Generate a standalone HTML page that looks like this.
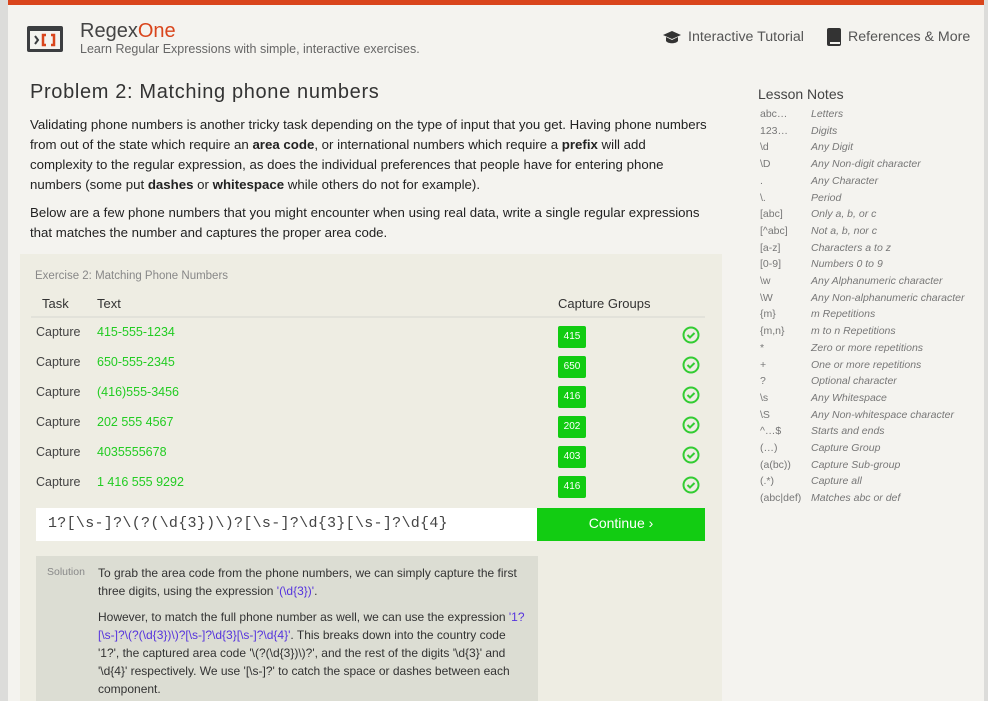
<!DOCTYPE html>
<html style="overflow:hidden"><head><meta charset="utf-8"><style>
*{margin:0;padding:0;box-sizing:border-box}
html,body{width:988px;height:701px;overflow:hidden}
body{background:#dcdcda;font-family:"Liberation Sans",sans-serif;position:relative}
.page{position:absolute;left:8px;top:0;width:976px;height:701px;background:#f4f3ef}
.bar{position:absolute;left:8px;top:0;width:976px;height:5px;background:#d9451c}
.a{position:absolute;white-space:nowrap}
p.t{position:absolute;left:30px;white-space:nowrap;font-size:13.25px;line-height:20px;color:#222}
.ex{position:absolute;left:20px;top:254px;width:702px;height:447px;background:#eeede3}
.row{position:absolute;left:36px;width:670px;height:30px;font-size:12.5px}
.badge{position:absolute;left:522px;top:5px;width:28px;height:22px;background:#11cc11;color:#fff;font-size:10px;text-align:center;line-height:22px;border-radius:2px}
.chk{position:absolute;left:646px;top:5px}
.notes div{position:absolute;font-size:10.5px;color:#777;white-space:nowrap}
.notes i{position:absolute;left:51px}
.sol{position:absolute;left:36px;top:556px;width:502px;height:145px;background:#dcddd3;overflow:hidden}
.sol p{position:absolute;left:62px;width:430px;font-size:12px;line-height:18px;color:#333}
.b{color:#5533dd}
</style></head><body>
<div class="page"></div><div class="bar"></div>
<svg class="a" style="left:26px;top:25px" width="38" height="28" viewBox="0 0 38 28"><rect x="1" y="1" width="36" height="26" rx="2" fill="#3b3d40"/><rect x="4" y="6" width="30" height="18" fill="#f4f3ef"/><path d="M9 11l3 4-3 4" stroke="#3b3d40" stroke-width="2" fill="none"/><path d="M20 10h-3v10h3M25 10h3v10h-3" stroke="#d9451c" stroke-width="2.5" fill="none"/></svg>
<div class="a" style="left:80px;top:20px;font-size:20px;color:#444">Regex<span style="color:#d9451c">One</span></div>
<div class="a" style="left:80px;top:42px;font-size:12.5px;color:#666">Learn Regular Expressions with simple, interactive exercises.</div>
<svg class="a" style="left:662px;top:30px" width="20" height="16" viewBox="0 0 20 16"><path d="M10 1L1 5l9 4 9-4z" fill="#333"/><path d="M4 7v4c2 3 10 3 12 0V7l-6 3z" fill="#333"/></svg>
<div class="a" style="left:688px;top:29px;font-size:14.2px;color:#555">Interactive Tutorial</div>
<svg class="a" style="left:827px;top:28px" width="14" height="18"><rect x="0" y="0" width="14" height="18" rx="2" fill="#333"/><rect x="3" y="14" width="10" height="2" fill="#f4f3ef"/></svg>
<div class="a" style="left:848px;top:29px;font-size:14.2px;color:#555">References &amp; More</div>
<div class="a" style="left:30px;top:81px;font-size:20px;color:#333;letter-spacing:0.65px">Problem 2: Matching phone numbers</div>
<p class="t" style="top:115px">Validating phone numbers is another tricky task depending on the type of input that you get. Having phone numbers<br>from out of the state which require an <b>area code</b>, or international numbers which require a <b>prefix</b> will add<br>complexity to the regular expression, as does the individual preferences that people have for entering phone<br>numbers (some put <b>dashes</b> or <b>whitespace</b> while others do not for example).</p>
<p class="t" style="top:203px">Below are a few phone numbers that you might encounter when using real data, write a single regular expressions<br>that matches the number and captures the proper area code.</p>
<div class="ex"></div>
<div class="a" style="left:35px;top:270px;font-size:11.5px;color:#888">Exercise 2: Matching Phone Numbers</div>
<div class="a" style="left:42px;top:296px;font-size:13px;color:#333">Task</div>
<div class="a" style="left:97px;top:296px;font-size:13px;color:#333">Text</div>
<div class="a" style="left:558px;top:296px;font-size:13px;color:#333">Capture Groups</div>
<div class="a" style="left:31px;top:316px;width:674px;height:2px;background:#e2e2da"></div>
<div class="row" style="top:321px"><span class="a" style="left:0;top:4px;color:#444">Capture</span><span class="a" style="left:61px;top:4px;color:#2c2">415-555-1234</span><span class="badge">415</span><svg class="chk" width="18" height="18"><circle cx="9" cy="9" r="7.5" fill="none" stroke="#3c3" stroke-width="2"/><path d="M5.5 9l2.5 2.5 4.5-4.5" stroke="#3c3" stroke-width="2" fill="none"/></svg></div>
<div class="row" style="top:351px"><span class="a" style="left:0;top:4px;color:#444">Capture</span><span class="a" style="left:61px;top:4px;color:#2c2">650-555-2345</span><span class="badge">650</span><svg class="chk" width="18" height="18"><circle cx="9" cy="9" r="7.5" fill="none" stroke="#3c3" stroke-width="2"/><path d="M5.5 9l2.5 2.5 4.5-4.5" stroke="#3c3" stroke-width="2" fill="none"/></svg></div>
<div class="row" style="top:381px"><span class="a" style="left:0;top:4px;color:#444">Capture</span><span class="a" style="left:61px;top:4px;color:#2c2">(416)555-3456</span><span class="badge">416</span><svg class="chk" width="18" height="18"><circle cx="9" cy="9" r="7.5" fill="none" stroke="#3c3" stroke-width="2"/><path d="M5.5 9l2.5 2.5 4.5-4.5" stroke="#3c3" stroke-width="2" fill="none"/></svg></div>
<div class="row" style="top:411px"><span class="a" style="left:0;top:4px;color:#444">Capture</span><span class="a" style="left:61px;top:4px;color:#2c2">202 555 4567</span><span class="badge">202</span><svg class="chk" width="18" height="18"><circle cx="9" cy="9" r="7.5" fill="none" stroke="#3c3" stroke-width="2"/><path d="M5.5 9l2.5 2.5 4.5-4.5" stroke="#3c3" stroke-width="2" fill="none"/></svg></div>
<div class="row" style="top:441px"><span class="a" style="left:0;top:4px;color:#444">Capture</span><span class="a" style="left:61px;top:4px;color:#2c2">4035555678</span><span class="badge">403</span><svg class="chk" width="18" height="18"><circle cx="9" cy="9" r="7.5" fill="none" stroke="#3c3" stroke-width="2"/><path d="M5.5 9l2.5 2.5 4.5-4.5" stroke="#3c3" stroke-width="2" fill="none"/></svg></div>
<div class="row" style="top:471px"><span class="a" style="left:0;top:4px;color:#444">Capture</span><span class="a" style="left:61px;top:4px;color:#2c2">1 416 555 9292</span><span class="badge">416</span><svg class="chk" width="18" height="18"><circle cx="9" cy="9" r="7.5" fill="none" stroke="#3c3" stroke-width="2"/><path d="M5.5 9l2.5 2.5 4.5-4.5" stroke="#3c3" stroke-width="2" fill="none"/></svg></div>
<div class="a" style="left:36px;top:508px;width:502px;height:33px;background:#fff"></div>
<div class="a" style="left:48px;top:515px;font-family:'Liberation Mono',monospace;font-size:15px;color:#444;letter-spacing:0.3px">1?[\s-]?\(?(\d{3})\)?[\s-]?\d{3}[\s-]?\d{4}</div>
<div class="a" style="left:537px;top:508px;width:168px;height:33px;background:#12cc12;color:#fff;font-size:14px;text-align:center;line-height:31px">Continue ›</div>
<div class="sol"><span class="a" style="left:11px;top:10px;font-size:10.5px;color:#888">Solution</span>
<p style="top:8px">To grab the area code from the phone numbers, we can simply capture the first three digits, using the expression <span class="b">'(\d{3})'</span>.</p>
<p style="top:52px">However, to match the full phone number as well, we can use the expression <span class="b">'1?[\s-]?\(?(\d{3})\)?[\s-]?\d{3}[\s-]?\d{4}'</span>. This breaks down into the country code '1?', the captured area code '\(?(\d{3})\)?', and the rest of the digits '\d{3}' and '\d{4}' respectively. We use '[\s-]?' to catch the space or dashes between each component.</p></div>
<div class="a" style="left:758px;top:86px;font-size:14px;color:#444">Lesson Notes</div>
<div class="notes" style="position:absolute;left:760px;top:108px">
<div style="top:0">abc…<i>Letters</i></div>
<div style="top:16.7px">123…<i>Digits</i></div>
<div style="top:33.4px">\d<i>Any Digit</i></div>
<div style="top:50.1px">\D<i>Any Non-digit character</i></div>
<div style="top:66.8px">.<i>Any Character</i></div>
<div style="top:83.5px">\.<i>Period</i></div>
<div style="top:100.2px">[abc]<i>Only a, b, or c</i></div>
<div style="top:116.9px">[^abc]<i>Not a, b, nor c</i></div>
<div style="top:133.6px">[a-z]<i>Characters a to z</i></div>
<div style="top:150.3px">[0-9]<i>Numbers 0 to 9</i></div>
<div style="top:167px">\w<i>Any Alphanumeric character</i></div>
<div style="top:183.7px">\W<i>Any Non-alphanumeric character</i></div>
<div style="top:200.4px">{m}<i>m Repetitions</i></div>
<div style="top:217.1px">{m,n}<i>m to n Repetitions</i></div>
<div style="top:233.8px">*<i>Zero or more repetitions</i></div>
<div style="top:250.5px">+<i>One or more repetitions</i></div>
<div style="top:267.2px">?<i>Optional character</i></div>
<div style="top:283.9px">\s<i>Any Whitespace</i></div>
<div style="top:300.6px">\S<i>Any Non-whitespace character</i></div>
<div style="top:317.3px">^…$<i>Starts and ends</i></div>
<div style="top:334px">(…)<i>Capture Group</i></div>
<div style="top:350.7px">(a(bc))<i>Capture Sub-group</i></div>
<div style="top:367.4px">(.*)<i>Capture all</i></div>
<div style="top:384.1px">(abc|def)<i>Matches abc or def</i></div>
</div>
</body></html>
